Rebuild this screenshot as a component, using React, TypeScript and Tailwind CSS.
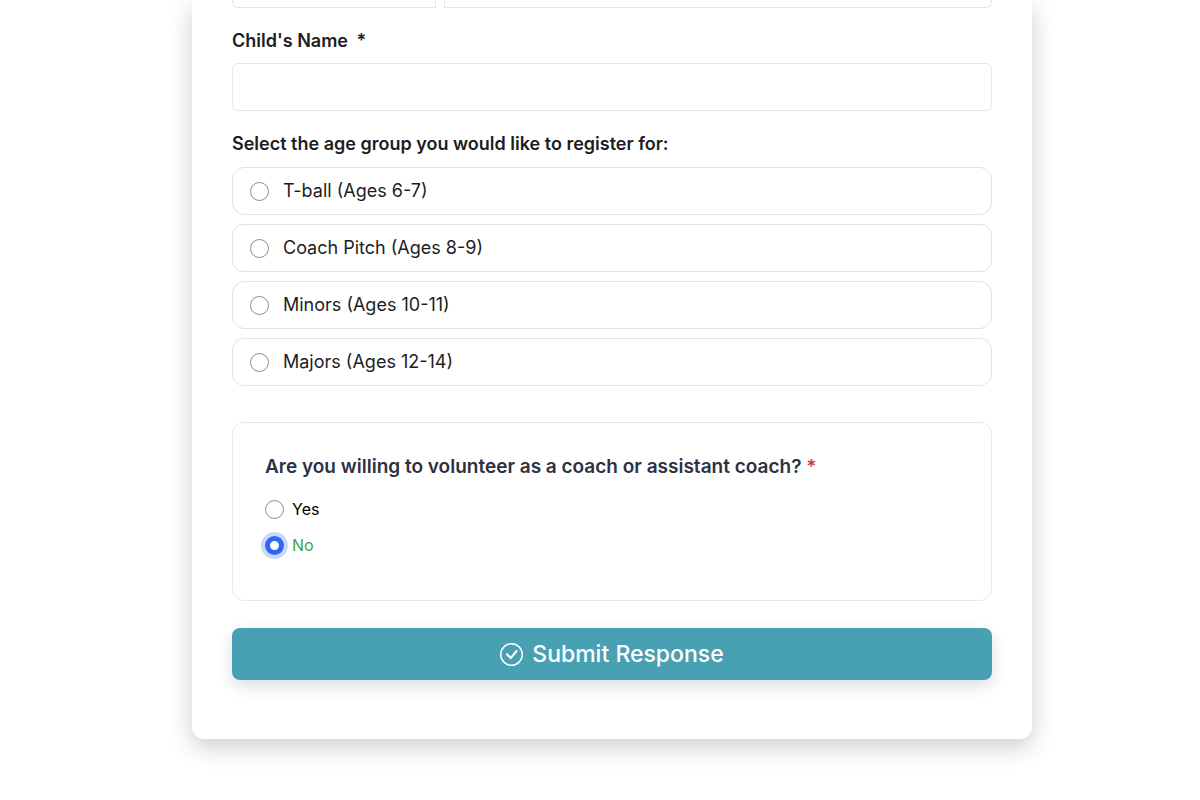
import * as React from "react";
import { useState } from "react";
import { BsCheckCircle } from "react-icons/bs";

const ageGroups = [
    { id: "tball", label: "T-ball (Ages 6-7)" },
    { id: "coach-pitch", label: "Coach Pitch (Ages 8-9)" },
    { id: "minors", label: "Minors (Ages 10-11)" },
    { id: "majors", label: "Majors (Ages 12-14)" },
];

const App: React.FC = () => {
    const [ageGroup, setAgeGroup] = useState<string | null>(null);
    const [volunteer, setVolunteer] = useState("No");

    return (
        <main className="bg-white pl-6 pb-15 font-['Inter',sans-serif] text-[#1d1d1f]">
            <form
                onSubmit={(e) => e.preventDefault()}
                className="mx-auto max-w-[840px] rounded-b-xl bg-white px-10 pb-[59px] shadow-[0_8px_24px_rgba(0,0,0,0.2)]"
            >
                {/* Lower edge of the split phone field */}
                <div className="flex gap-2">
                    <input aria-label="Country code" className="h-2 w-[204px] rounded-bl-md border border-t-0 border-[#e5e5e5] outline-none" />
                    <input aria-label="Phone number" className="h-2 min-w-0 flex-1 rounded-br-md border border-t-0 border-[#e5e5e5] outline-none" />
                </div>

                <label htmlFor="child-name" className="mt-[21px] block text-lg/6 font-semibold">
                    Child's Name <span className="ml-1">*</span>
                </label>
                <input id="child-name" type="text" className="mt-[10px] block h-12 w-full rounded-md border border-[#e8e8e8] px-4 text-lg outline-none" />

                <fieldset className="mt-[21px]">
                    <legend className="text-lg/6 font-semibold">Select the age group you would like to register for:</legend>
                    <div className="mt-[11px] flex flex-col gap-[9px]">
                        {ageGroups.map((group) => (
                            <label key={group.id} className="flex h-12 items-center gap-[14px] rounded-xl border border-[#dfe3e3] px-[17px] text-lg/6">
                                <input
                                    type="radio"
                                    name="age-group"
                                    value={group.id}
                                    checked={ageGroup === group.id}
                                    onChange={() => setAgeGroup(group.id)}
                                    className="size-[19px] shrink-0 appearance-none rounded-full border border-[#8c8c8c] bg-white checked:border-5 checked:border-[#2f68f0]"
                                />
                                {group.label}
                            </label>
                        ))}
                    </div>
                </fieldset>

                <fieldset className="mt-9 rounded-xl border border-[#e8e8e8] px-8 pt-8 pb-[43px]">
                    <legend className="float-left w-full text-[19px]/6 font-semibold text-[#2d3142]">
                        Are you willing to volunteer as a coach or assistant coach? <span className="text-[#dc3545]">*</span>
                    </legend>
                    <div className="clear-both flex flex-col items-start gap-3 pt-[18px]">
                        {["Yes", "No"].map((answer) => (
                            <label key={answer} className={`flex items-center gap-2 text-base/6 ${volunteer === answer ? "text-[#46a049]" : "text-black"}`}>
                                <input
                                    type="radio"
                                    name="volunteer"
                                    value={answer}
                                    checked={volunteer === answer}
                                    onChange={() => setVolunteer(answer)}
                                    className="size-[19px] shrink-0 appearance-none rounded-full border border-[#8c8c8c] bg-white checked:border-5 checked:border-[#2f68f0] checked:ring-4 checked:ring-[#cad8fb]"
                                />
                                {answer}
                            </label>
                        ))}
                    </div>
                </fieldset>

                <button
                    type="submit"
                    className="mt-[27px] flex h-[52px] w-full items-center justify-center gap-[9px] rounded-lg bg-[#48a0b3] text-[23px]/8 font-medium text-white shadow-[0_6px_16px_rgba(40,50,90,0.16)]"
                >
                    <BsCheckCircle size={23} />
                    Submit Response
                </button>
            </form>
        </main>
    );
};

export default App;
